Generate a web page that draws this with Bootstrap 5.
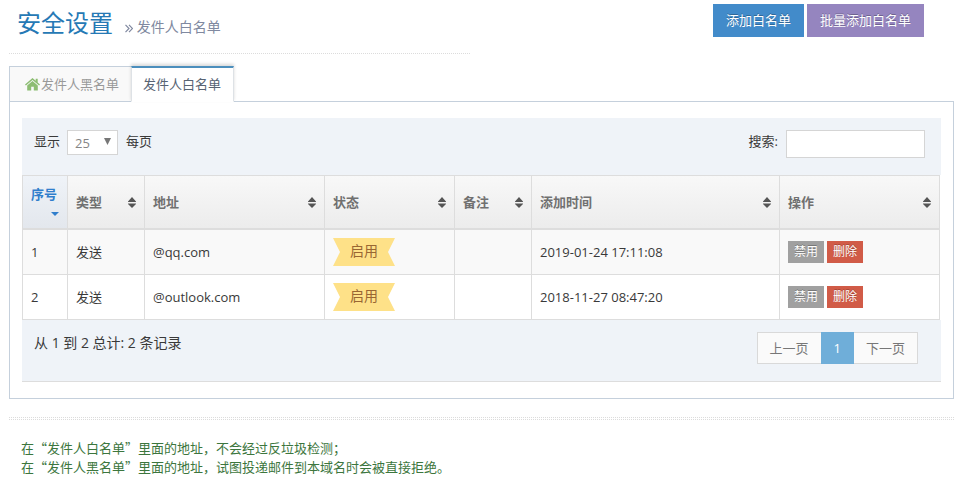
<!DOCTYPE html>
<html lang="zh-CN">
<head>
<meta charset="utf-8">
<meta name="viewport" content="width=device-width, initial-scale=1">
<title>安全设置</title>
<link href="https://cdn.jsdelivr.net/npm/bootstrap@5.3.0/dist/css/bootstrap.min.css" rel="stylesheet">
<style>
body{font:13px/20px "Open Sans","Noto Sans CJK SC",sans-serif;color:#393939;background:#fff}
.page-wrap{padding:4px 3px 0 9px}
.title-box{padding:0 8px 8px;border-bottom:1px dotted #dcdcdc}
.title-box h1{font-size:24px;line-height:37px;color:#2679b5;font-weight:400}
.title-box small{font-size:14px;color:#8089a0;margin-left:6px}
.btn-flat{--bs-btn-font-size:13px;--bs-btn-line-height:21px;--bs-btn-padding-x:13px;--bs-btn-padding-y:6px;--bs-btn-border-radius:0;--bs-btn-border-width:0;--bs-btn-color:#fff;--bs-btn-hover-color:#fff;text-shadow:0 -1px 0 rgba(0,0,0,.25)}
.btn-blue{--bs-btn-bg:#428bca;--bs-btn-hover-bg:#1b6aaa}
.btn-purple{--bs-btn-bg:#9585bf;--bs-btn-hover-bg:#7461aa}
.btn-grey{--bs-btn-bg:#a0a0a0;--bs-btn-hover-bg:#888}
.btn-red{--bs-btn-bg:#d15b47;--bs-btn-hover-bg:#b74635}
.btn-mini{--bs-btn-font-size:12px;--bs-btn-line-height:18px;--bs-btn-padding-x:6px;--bs-btn-padding-y:2px}
.header-actions{gap:3px;padding-right:30px}
.page-tabs{--bs-nav-tabs-border-width:1px;--bs-nav-tabs-border-radius:0;border:0;padding-top:12px}
.page-tabs .nav-item{display:flex;align-items:flex-end}
.page-tabs .nav-link{font-size:13px;line-height:18px;padding:8px 12px;border:1px solid #c5d0dc;color:#999;background:#f9f9f9;margin:0}
.page-tabs .nav-item:first-child .nav-link{border-right:0;padding-left:15px;border-bottom:0;display:flex;align-items:center;gap:1px}
.page-tabs .nav-link.active{color:#576373;background:#fff;border-top:2px solid #4c8fbd;border-bottom-color:#fff;box-shadow:0 -2px 3px rgba(0,0,0,.15);margin-bottom:-1px;padding:7px 12px 8px 11px;z-index:1;position:relative}
.home-mark{opacity:.75}
.pane-box{border:1px solid #c5d0dc;padding:16px 12px}
.strip{background:#eff3f8;padding:12px}
.strip-top{padding-bottom:17px;padding-right:16px}
.strip-top label,.strip-top .per-page{line-height:23px}
.strip-bottom{padding-right:23px;padding-bottom:17px;border-bottom:1px solid #ddd}
.strip select,.strip input{border:1px solid #d5d5d5;border-radius:0;background-color:#fff;color:#858585;font-size:13px}
.length-select{appearance:none;width:51px;height:25px;padding:0 7px}
.select-wrap{position:relative;margin:0 8px 0 7px}
.select-wrap svg{position:absolute;right:7px;top:8px;pointer-events:none}
.search-field{width:139px;height:28px;padding:0 6px}
.list-grid{table-layout:fixed;border-collapse:separate;border-spacing:0;width:calc(100% - 1px);margin:0;border:1px solid #ddd;border-width:1px 0 0 1px}
.list-grid th,.list-grid td{border:0 solid #ddd;border-width:0 1px 1px 0;padding:8px;vertical-align:middle}
.list-grid th{height:54px;padding:6px 8px;border-bottom-width:2px;background:linear-gradient(#f8f8f8,#ececec);color:#707070;font-weight:600}
.list-grid td{height:45px;padding:6px 8px}
.list-grid tbody tr:first-child td{background:#f9f9f9}
.list-grid th.sorted{background:linear-gradient(#eff3f8,#e3e7ed);color:#307ecc}
.col-no{width:45px}.col-kind{width:77px}.col-addr{width:180px}.col-state{width:130px}.col-ops{width:160px}
.ribbon{display:block;width:62px;height:28px;line-height:26px;text-align:center;font-size:14px;color:#963;background:#fee188;clip-path:polygon(0 0,100% 0,calc(100% - 7px) 50%,100% 100%,0 100%,7px 50%)}
.page-nav{--bs-pagination-font-size:13px;--bs-pagination-padding-x:12px;--bs-pagination-padding-y:5px;--bs-pagination-color:#777;--bs-pagination-bg:#fafafa;--bs-pagination-border-color:#d9d9d9;--bs-pagination-border-radius:0;--bs-pagination-active-bg:#6faed9;--bs-pagination-active-border-color:#6faed9}
.page-nav .page-link{line-height:20px}
.info-text{font-size:14px;line-height:22px}
.rule-pair{margin-top:18px;height:3px;border:dotted #dcdcdc;border-width:1px 0}
.notes{padding:18px 12px 0;line-height:19px;color:#3c763d;font-family:"Noto Sans CJK SC",sans-serif}
</style>
<script src="https://cdn.jsdelivr.net/npm/bootstrap@5.3.0/dist/js/bootstrap.bundle.min.js"></script>
</head>
<body>
<svg class="d-none" aria-hidden="true">
  <symbol id="sort" viewBox="0 0 8 11"><path fill="#555" d="M4 0 8 4.500V5H0V4.500zM0 6.500h8V7L4 11 0 7z"/></symbol>
</svg>
<main class="page-wrap">
  <header class="row gx-0">
    <div class="col-6 pe-2">
      <div class="title-box me-1">
        <h1 class="mb-0">安全设置
          <small><svg width="8" height="9" viewBox="0 0 8 9" fill="none" stroke="#8089a0" stroke-width="1.200" aria-hidden="true"><path d="M.5.8 4 4.500.5 8.200M4 .8l3.500 3.700L4 8.200"/></svg> 发件人白名单</small>
        </h1>
      </div>
    </div>
    <div class="col-6 d-flex justify-content-end align-items-start header-actions">
      <button type="button" class="btn btn-flat btn-blue">添加白名单</button>
      <button type="button" class="btn btn-flat btn-purple">批量添加白名单</button>
    </div>
  </header>

  <ul class="nav nav-tabs page-tabs">
    <li class="nav-item"><a class="nav-link" href="#black"><svg class="home-mark" width="15" height="13" viewBox="0 0 15 13" fill="#69aa46" aria-hidden="true"><path d="M7.500 0 0 6.400l.9 1L7.500 1.900l6.600 5.500.9-1-2.300-2V.8h-2v1.900z"/><path d="M7.500 3 2.200 7.400V12.500h4V8.800h2.600v3.700h4V7.400z"/></svg>发件人黑名单</a></li>
    <li class="nav-item"><a class="nav-link active" href="#white" aria-current="page">发件人白名单</a></li>
  </ul>

  <section class="pane-box" id="white">
    <div class="strip strip-top d-flex justify-content-between align-items-start">
      <div class="d-flex align-items-start">
        <label for="len">显示</label>
        <span class="select-wrap d-flex">
          <select id="len" class="length-select"><option>25</option><option>50</option></select>
          <svg width="7" height="7" viewBox="0 0 7 7" aria-hidden="true"><path fill="#777" d="M0 0h7L3.500 7z"/></svg>
        </span>
        <span class="per-page">每页</span>
      </div>
      <div class="d-flex align-items-start">
        <label for="q" class="me-2">搜索:</label>
        <input id="q" type="search" class="search-field">
      </div>
    </div>

    <table class="list-grid">
      <colgroup><col class="col-no"><col class="col-kind"><col class="col-addr"><col class="col-state"><col class="col-kind"><col><col class="col-ops"></colgroup>
      <thead>
        <tr>
          <th class="sorted">序号<svg class="d-block ms-auto mt-2 mb-1" width="8" height="4" viewBox="0 0 8 4" aria-hidden="true"><path fill="#307ecc" d="M0 0h8L4 4z"/></svg></th>
          <th><div class="d-flex justify-content-between align-items-center">类型<svg width="8" height="11"><use href="#sort"/></svg></div></th>
          <th><div class="d-flex justify-content-between align-items-center">地址<svg width="8" height="11"><use href="#sort"/></svg></div></th>
          <th><div class="d-flex justify-content-between align-items-center">状态<svg width="8" height="11"><use href="#sort"/></svg></div></th>
          <th><div class="d-flex justify-content-between align-items-center">备注<svg width="8" height="11"><use href="#sort"/></svg></div></th>
          <th><div class="d-flex justify-content-between align-items-center">添加时间<svg width="8" height="11"><use href="#sort"/></svg></div></th>
          <th><div class="d-flex justify-content-between align-items-center">操作<svg width="8" height="11"><use href="#sort"/></svg></div></th>
        </tr>
      </thead>
      <tbody>
        <tr>
          <td>1</td><td>发送</td><td>@qq.com</td><td><span class="ribbon">启用</span></td><td></td><td>2019-01-24 17:11:08</td>
          <td><div class="d-flex header-actions pe-0"><button type="button" class="btn btn-flat btn-mini btn-grey">禁用</button><button type="button" class="btn btn-flat btn-mini btn-red">删除</button></div></td>
        </tr>
        <tr>
          <td>2</td><td>发送</td><td>@outlook.com</td><td><span class="ribbon">启用</span></td><td></td><td>2018-11-27 08:47:20</td>
          <td><div class="d-flex header-actions pe-0"><button type="button" class="btn btn-flat btn-mini btn-grey">禁用</button><button type="button" class="btn btn-flat btn-mini btn-red">删除</button></div></td>
        </tr>
      </tbody>
    </table>

    <div class="strip strip-bottom d-flex justify-content-between align-items-start">
      <div class="info-text">从 1 到 2 总计: 2 条记录</div>
      <nav aria-label="分页">
        <ul class="pagination page-nav mb-0">
          <li class="page-item"><a class="page-link" href="#prev">上一页</a></li>
          <li class="page-item active"><a class="page-link" href="#1" aria-current="page">1</a></li>
          <li class="page-item"><a class="page-link" href="#next">下一页</a></li>
        </ul>
      </nav>
    </div>
  </section>

  <div class="rule-pair"></div>
  <div class="notes">
    在“发件人白名单”里面的地址，不会经过反垃圾检测；<br>
    在“发件人黑名单”里面的地址，试图投递邮件到本域名时会被直接拒绝。
  </div>
</main>
</body>
</html>
